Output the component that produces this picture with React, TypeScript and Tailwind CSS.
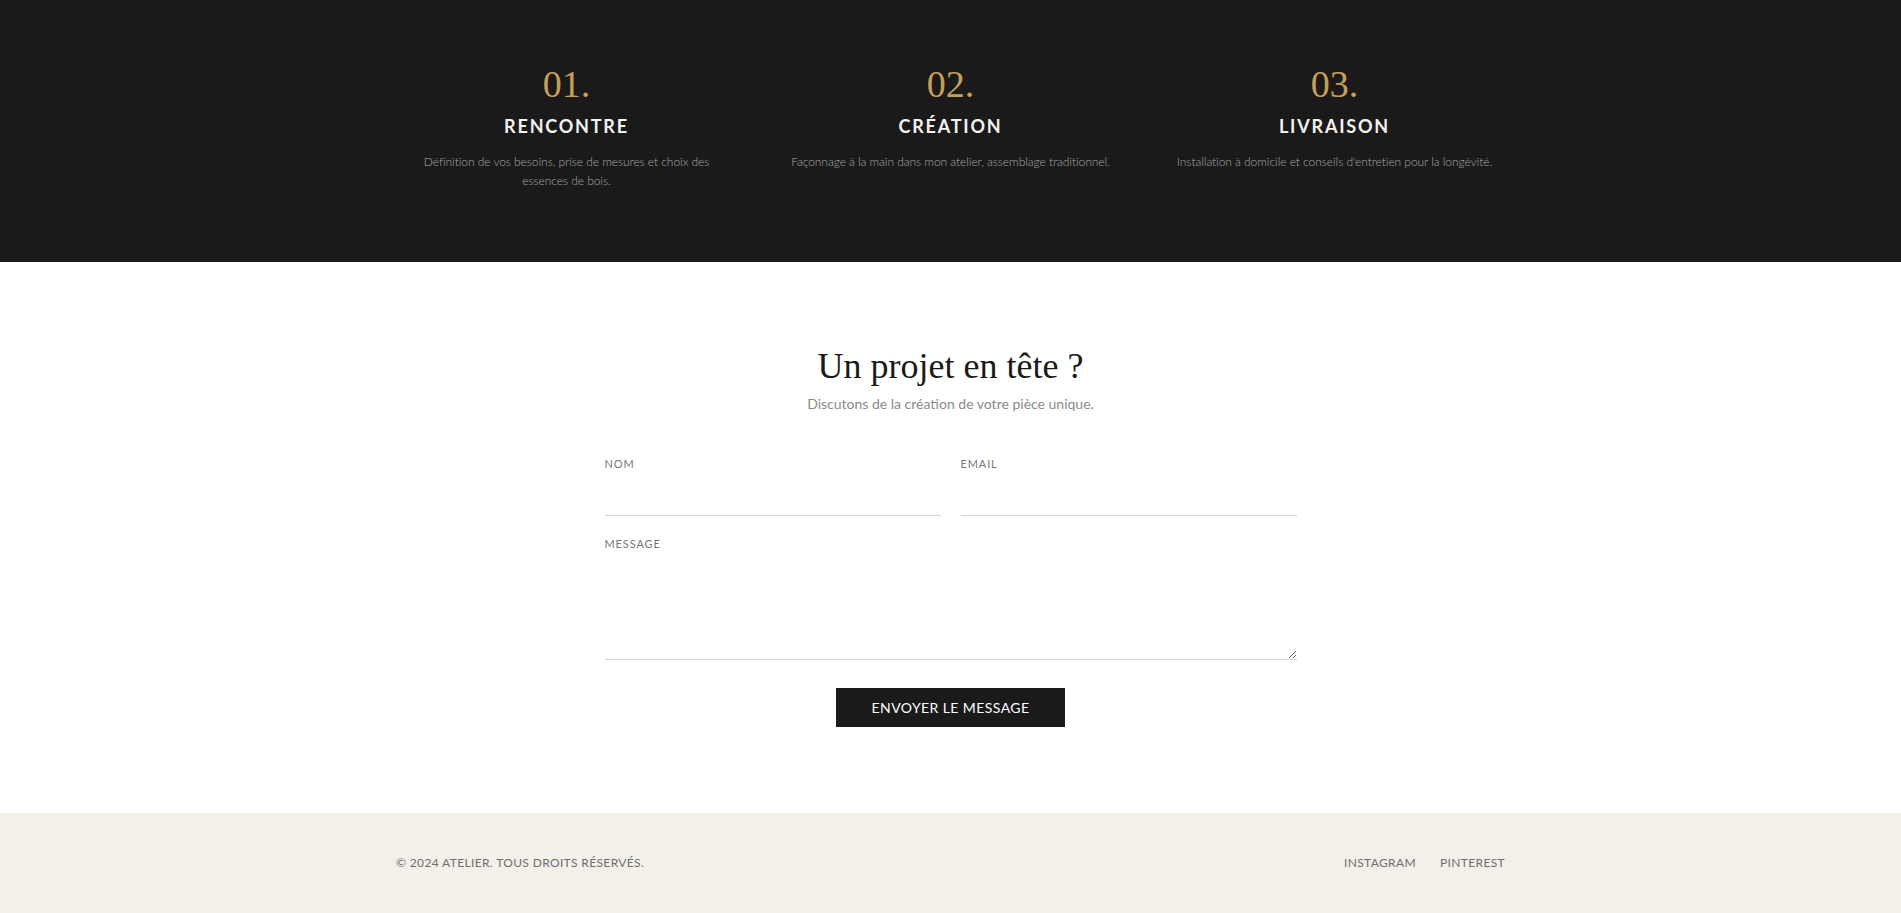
import React from "react"

const steps = [
  {
    num: "01.",
    title: "RENCONTRE",
    text: "Définition de vos besoins, prise de mesures et choix des essences de bois.",
    width: "max-w-[300px]",
  },
  {
    num: "02.",
    title: "CRÉATION",
    text: "Façonnage à la main dans mon atelier, assemblage traditionnel.",
    width: "max-w-none",
  },
  {
    num: "03.",
    title: "LIVRAISON",
    text: "Installation à domicile et conseils d'entretien pour la longévité.",
    width: "max-w-none",
  },
]

const serif = "font-['Liberation_Serif','DejaVu_Serif',serif]"
const sans = "font-['Lato','Noto_Sans',sans-serif]"

export default function App() {
  return (
    <div className={`min-h-screen bg-white ${sans}`}>
      {/* process */}
      <section className="bg-[#1a1a1a] pt-16 pb-[72px]">
        <div className="max-w-6xl mx-auto px-6 grid grid-cols-3 gap-12">
          {steps.map((step) => (
            <div key={step.num} className="text-center">
              <div className={`${serif} text-[38px] leading-10 text-[#c6a058]`}>{step.num}</div>
              <h3 className="mt-2 text-[18px] leading-7 font-bold tracking-[0.1em] text-[#f5f3ef]">
                {step.title}
              </h3>
              <p className={`mt-3 mx-auto ${step.width} text-[12px] leading-[19px] font-light tracking-[-0.005em] text-[#a8a8a8]`}>
                {step.text}
              </p>
            </div>
          ))}
        </div>
      </section>

      {/* contact */}
      <section className="pt-[83px] pb-[86px]">
        <div className="max-w-[692px] mx-auto">
          <div className="text-center">
            <h2 className={`${serif} text-[36px] leading-[43px] text-[#1a1a1a]`}>Un projet en tête ?</h2>
            <p className="mt-1.5 text-sm leading-5 text-[#8a8a8a]">
              Discutons de la création de votre pièce unique.
            </p>
          </div>

          <form className="mt-[42px]" onSubmit={(e) => e.preventDefault()}>
            <div className="grid grid-cols-2 gap-5">
              <label className="block">
                <span className="block text-[11px] leading-4 tracking-[0.08em] text-[#777]">NOM</span>
                <input
                  type="text"
                  className="mt-2 w-full h-9 border-b border-[#d4d4d4] bg-transparent outline-none text-sm"
                />
              </label>
              <label className="block">
                <span className="block text-[11px] leading-4 tracking-[0.08em] text-[#777]">EMAIL</span>
                <input
                  type="email"
                  className="mt-2 w-full h-9 border-b border-[#d4d4d4] bg-transparent outline-none text-sm"
                />
              </label>
            </div>

            <label className="block mt-5">
              <span className="block text-[11px] leading-4 tracking-[0.08em] text-[#777]">MESSAGE</span>
              <textarea className="mt-2 block w-full h-[100px] border-b border-[#d4d4d4] bg-transparent outline-none text-sm" />
            </label>

            <div className="mt-7 flex justify-center">
              <button
                type="submit"
                className="w-[229px] h-[39px] bg-[#1a1a1a] text-white text-[14px] tracking-[0.03em]"
              >
                ENVOYER LE MESSAGE
              </button>
            </div>
          </form>
        </div>
      </section>

      {/* footer */}
      <footer className="bg-[#f3f0ea] py-10">
        <div className="max-w-[1157px] mx-auto px-6 flex items-center justify-between text-[12px] leading-5 tracking-[0.03em] text-[#6e6e6e]">
          <span>© 2024 ATELIER. TOUS DROITS RÉSERVÉS.</span>
          <div className="flex gap-6">
            <a href="#">INSTAGRAM</a>
            <a href="#">PINTEREST</a>
          </div>
        </div>
      </footer>
    </div>
  )
}
